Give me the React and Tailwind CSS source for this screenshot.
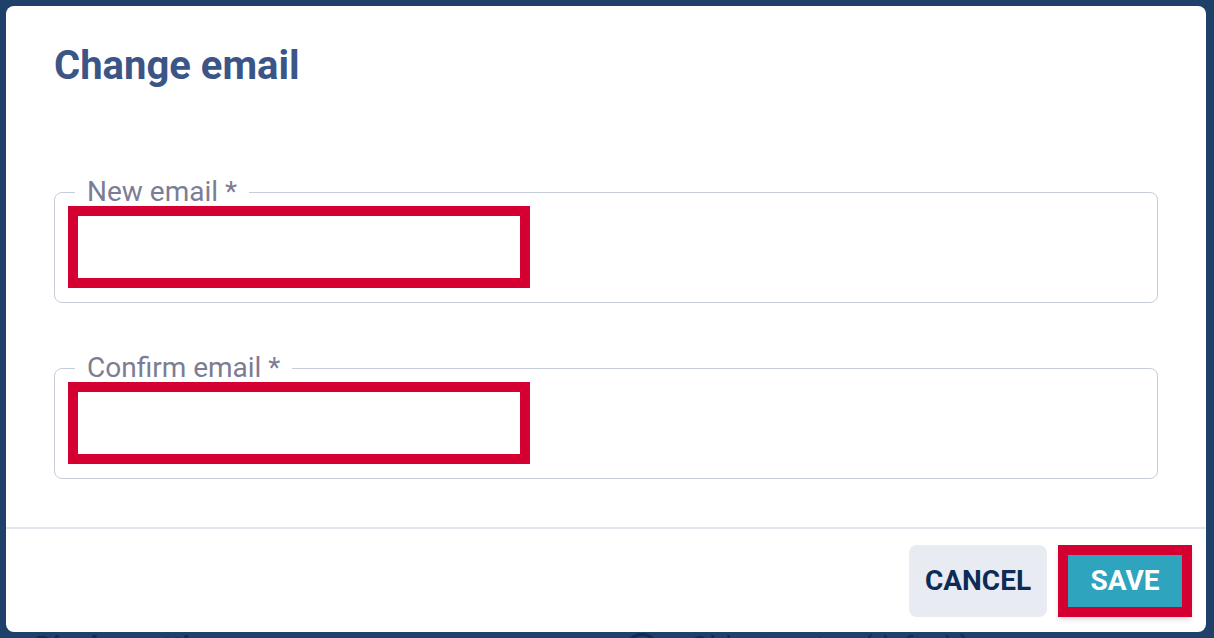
import React from 'react';

const font = { fontFamily: 'Roboto, "Liberation Sans", sans-serif' };

function EmailField({ label }) {
  return (
    <fieldset className="border border-[#c6cdd9] rounded-lg px-[13px] pb-[14px]">
      <legend className="ml-[7px] px-3 text-[28px] leading-7 text-[#7c7d94]">{label}</legend>
      <div className="w-[462px] h-[82px] border-[10px] border-[#d50032] bg-white" />
    </fieldset>
  );
}

export default function App() {
  return (
    <div className="w-[1214px] h-[638px] overflow-hidden bg-[#1f4068] pt-[6px]" style={font}>
      {/* Dialog */}
      <div className="ml-[6px] w-[1200px] bg-white rounded-lg">
        <div className="px-12 pt-9 pb-12">
          <h2 className="text-[40px] leading-[48px] font-bold text-[#3b5586]">Change email</h2>
          <div className="mt-[88px] flex flex-col gap-[51px]">
            <EmailField label="New email *" />
            <EmailField label="Confirm email *" />
          </div>
        </div>
        <div className="border-t-2 border-[#e3e6ec] flex justify-end items-center gap-[11px] pt-4 pb-[15px] pr-[14px]">
          <button className="w-[138px] h-[72px] rounded-lg bg-[#e9ebf2] text-[28px] font-bold text-[#0d2b57]">
            CANCEL
          </button>
          <button className="w-[134px] h-[72px] border-[10px] border-[#d50032] bg-[#2ea4bf] text-[28px] font-bold text-white shadow-md">
            SAVE
          </button>
        </div>
      </div>

      {/* Page behind the overlay */}
      <div className="flex items-start mt-[1px] text-[#102c52] text-[28px] leading-none">
        <span className="ml-[35px] w-[590px] font-bold">Display settings</span>
        <span className="w-[34px] h-[34px] rounded-full border-[3px] border-[#102c52]" />
        <span className="ml-[31px]">Oldest on top (default)</span>
      </div>
    </div>
  );
}
